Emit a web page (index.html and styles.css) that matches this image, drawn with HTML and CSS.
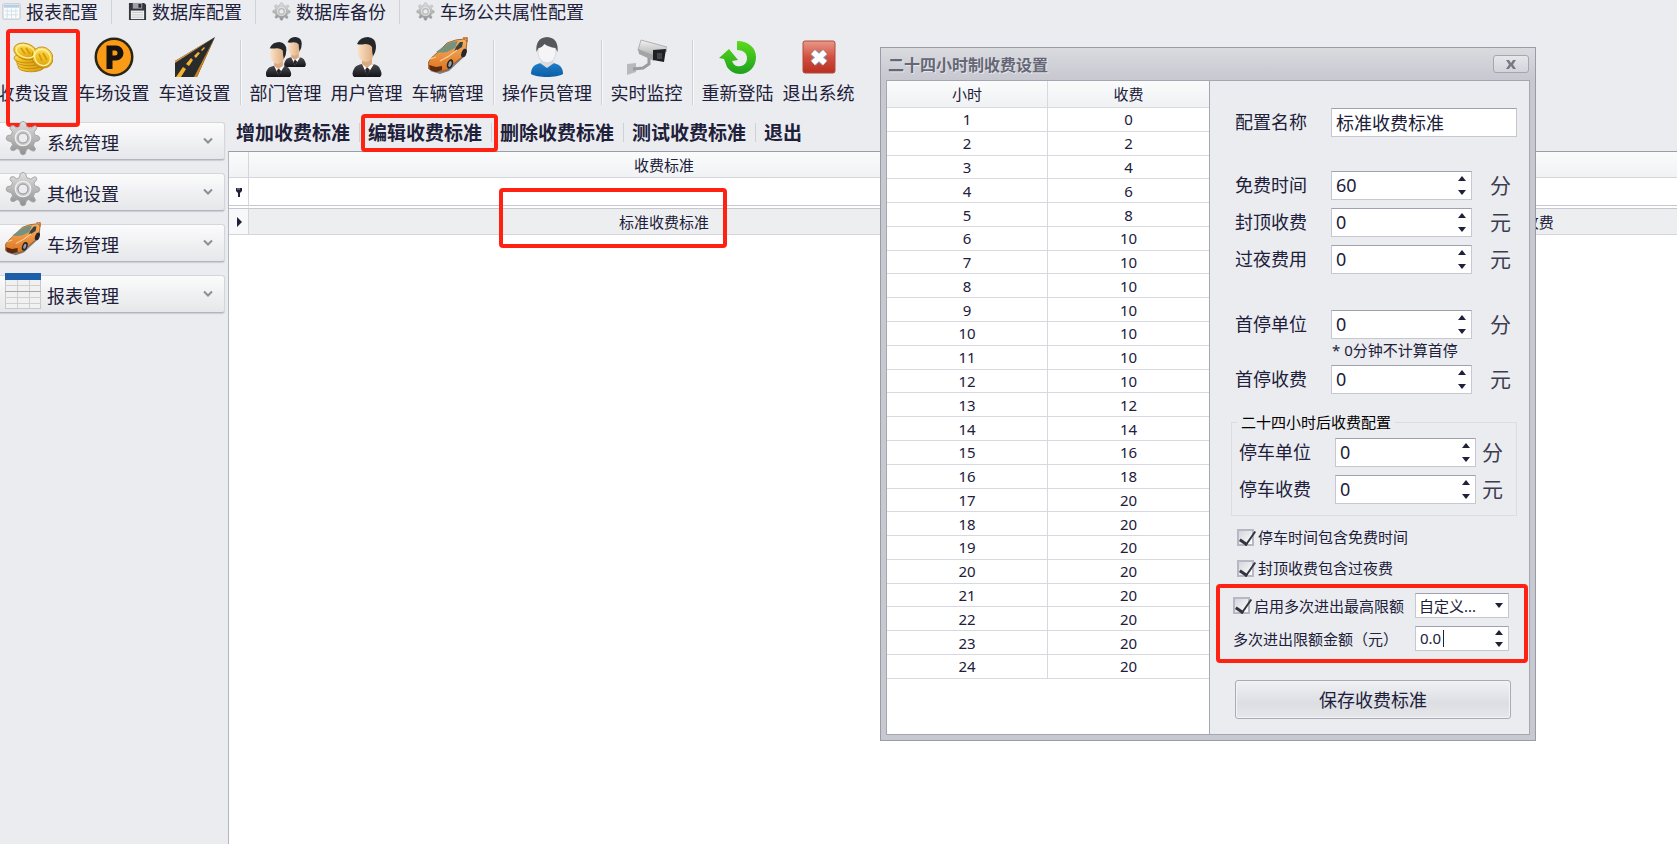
FILE: index.html
```
<!DOCTYPE html>
<html lang="zh-CN">
<head>
<meta charset="UTF-8" />
<title>收费设置</title>
<link rel="stylesheet" href="styles.css">
</head>
<body>

<!-- 图标 -->
<svg class="sprite" width="0" height="0" aria-hidden="true">
  <defs>
    <linearGradient id="silver" x1="0" y1="0" x2="0" y2="1"><stop offset="0" stop-color="#e2e2e2"/><stop offset="1" stop-color="#8f8f8f"/></linearGradient>
    <linearGradient id="gold" x1="0" y1="0" x2="1" y2="1"><stop offset="0" stop-color="#fff08a"/><stop offset=".5" stop-color="#f3c21f"/><stop offset="1" stop-color="#c88a10"/></linearGradient>
    <linearGradient id="orange" x1="0" y1="0" x2="0" y2="1"><stop offset="0" stop-color="#f7b164"/><stop offset="1" stop-color="#dd7420"/></linearGradient>
    <linearGradient id="skin" x1="0" y1="0" x2="1" y2="0"><stop offset="0" stop-color="#fbe3c8"/><stop offset="1" stop-color="#dba97c"/></linearGradient>
    <linearGradient id="suit" x1="0" y1="0" x2="0" y2="1"><stop offset="0" stop-color="#4a4a50"/><stop offset="1" stop-color="#111116"/></linearGradient>
    <linearGradient id="blue" x1="0" y1="0" x2="0" y2="1"><stop offset="0" stop-color="#1f7fc8"/><stop offset="1" stop-color="#0a5ca6"/></linearGradient>
    <linearGradient id="green" x1="0" y1="0" x2="0" y2="1"><stop offset="0" stop-color="#5bdc1b"/><stop offset="1" stop-color="#1f9f1f"/></linearGradient>
    <linearGradient id="red" x1="0" y1="0" x2="0" y2="1"><stop offset="0" stop-color="#e89a8a"/><stop offset=".5" stop-color="#d2503f"/><stop offset="1" stop-color="#b92f22"/></linearGradient>
    <linearGradient id="cam" x1="0" y1="0" x2="0" y2="1"><stop offset="0" stop-color="#f2f2f2"/><stop offset="1" stop-color="#a9a9a9"/></linearGradient>
  </defs>

  <symbol id="i-gear" viewBox="0 0 40 40">
    <path d="M17 3Q20 0 23 3L24.200 7.200L28.600 9L32.300 6.600Q36 6 35 10L32.200 13.400L33 16.500L37.500 18Q40 20.500 37.500 23L33 24.200L31.500 28L33.800 32Q33.600 35.600 29.500 34L26.200 31.700L23.800 33L22.500 37.500Q20 40 17.500 37.500L16.200 33L13.500 31.700L9.800 34Q6 34.500 6.200 31L8.500 27.500L7 24.200L2.500 22.800Q0 20.500 2.500 17.500L7 16.500L8.300 13L5.500 9.500Q5.500 5.800 9.500 6.200L13 8.700L16 7.200Z" fill="url(#silver)" stroke="#a2a2a2" stroke-width="1"/>
    <circle cx="20" cy="20" r="8.500" fill="#c9c9c9" stroke="#f0f0f0" stroke-width="1.500"/>
    <circle cx="20" cy="20" r="5.500" fill="#ebecef" stroke="#8c8c8c" stroke-width="1"/>
  </symbol>

  <symbol id="i-sheet" viewBox="0 0 20 20">
    <rect x="1" y="2" width="18" height="16" rx="1" fill="#fafcfd" stroke="#b9c0c8"/>
    <path d="M2 3h16v3H2z" fill="#b4d0e6"/>
    <path d="M5.500 7v10M10 7v10M14.500 7v10M3 9.500h14M3 13.500h14" stroke="#d3e0e8" stroke-width="1"/>
  </symbol>

  <symbol id="i-disk" viewBox="0 0 20 20">
    <path d="M1 1h16l2 2v16H1z" fill="#34363c"/>
    <path d="M5 1h10v6H5z" fill="#9ea2a8"/><path d="M11 2h3v4h-3z" fill="#2b2d32"/>
    <path d="M3 9h14v9H3z" fill="#f0f1f2"/><path d="M4 11h12M4 13.500h12M4 16h12" stroke="#c4c6c9"/>
  </symbol>

  <symbol id="i-coins" viewBox="0 0 40 40">
    <g fill="url(#gold)" stroke="#b98412" stroke-width=".8">
      <ellipse cx="18" cy="30" rx="13" ry="4.800"/>
      <ellipse cx="17" cy="27" rx="13" ry="4.800"/>
      <ellipse cx="16" cy="24" rx="13" ry="4.800"/>
      <ellipse cx="14" cy="21" rx="13" ry="5"/>
      <ellipse cx="12.500" cy="14.500" rx="12" ry="8" transform="rotate(18 12.500 14.500)"/>
      <ellipse cx="29.500" cy="20.500" rx="11" ry="10" transform="rotate(48 29.500 20.500)"/>
    </g>
    <g fill="none" stroke="#fff3a0" stroke-width="1.300">
      <ellipse cx="12.500" cy="14.500" rx="9.500" ry="6" transform="rotate(18 12.500 14.500)"/>
      <ellipse cx="29.500" cy="20.500" rx="8.500" ry="7.500" transform="rotate(48 29.500 20.500)"/>
    </g>
    <path d="M8 11l4 6M13 11l4 6M26 17l3 7M30 16l4 7" fill="none" stroke="#d39a14" stroke-width="1.800"/>
  </symbol>

  <symbol id="i-park" viewBox="0 0 40 40">
    <circle cx="20" cy="20" r="19.500" fill="#2a2415"/>
    <circle cx="20" cy="20" r="17" fill="#f99b16"/>
    <path d="M12.500 8.500H22a7.500 7.500 0 0 1 0 15h-3.500V32h-6zM18.500 13.500v5H21a2.500 2.500 0 0 0 0-5z" fill="#14130f" fill-rule="evenodd"/>
  </symbol>

  <symbol id="i-road" viewBox="0 0 40 40">
    <path d="M40 0L0 24v16h22z" fill="#2a2b2d"/>
    <path d="M40 0L0 24v2z" fill="#d79a45"/><path d="M40 0L19 40h3z" fill="#c9851f"/>
    <path d="M1 40l7-10 3 2-5 8zM11 27l5-6 2 2-4 6zM19 19l4-4 2 1-4 5zM26 13l3-3 1 1-3 3z" fill="#f6b32c"/>
  </symbol>

  <symbol id="i-man" viewBox="0 0 40 40">
    <path d="M7 40q-3-3 0-8c1-3 4-4 8-5l5 5 6-5c4 1 6 2 7 5 2 4 2 6 0 8q-13 1-26 0z" fill="url(#suit)"/>
    <path d="M15 27l5 11 7-11-7 2z" fill="#fff"/><path d="M20 30l-2 3 2 7 3-7z" fill="#25252b"/>
    <path d="M15 22h10v5l-5 4-5-4z" fill="#d9aa80"/>
    <ellipse cx="19" cy="14" rx="8.500" ry="11" fill="url(#skin)"/>
    <path d="M10 7Q13 0 21 0q8 1 8 9 0 6-3 10-1-3-1-9-2-3-7-3-5 1-8 0z" fill="#25282b"/>
  </symbol>

  <symbol id="i-men" viewBox="0 0 40 40">
    <use href="#i-man" x="14" y="0" width="30" height="30"/>
    <use href="#i-man" x="-5" y="5" width="35" height="35"/>
  </symbol>

  <symbol id="i-car" viewBox="0 0 40 40">
    <path d="M2 34l10 3 9-3 17-16v-4L22 31z" fill="#3a3a3a" opacity=".6"/>
    <path d="M0 27q1-5 9-11L19 6q9-4 17-4l3 2-1 10-4 6-11 9q-3 5-9 5-9 1-13-2-2-2-1-5z" fill="url(#orange)" stroke="#8f4c19" stroke-width=".8"/>
    <path d="M8 15L19 7q6-3 11-3l-3 7-8 4q-6 1-11 0z" fill="#77917f"/>
    <path d="M28 10l4-5 3 0-1 5-8 5z" fill="#38433d"/>
    <path d="M35 1l4 0v4" fill="none" stroke="#c4631c" stroke-width="1.500"/>
    <path d="M2 22l6-2M12 24l9-5 8-6" fill="none" stroke="#fbd19c" stroke-width="1.200"/>
    <ellipse cx="22" cy="27" rx="3" ry="5" fill="#26262a" transform="rotate(20 22 27)"/>
    <ellipse cx="22" cy="27" rx="1.500" ry="3" fill="#9d9da1" transform="rotate(20 22 27)"/>
    <ellipse cx="36" cy="16" rx="2.500" ry="4.500" fill="#26262a" transform="rotate(20 36 16)"/>
    <path d="M1 28l7 2 6-1v4l-6 2-6-2z" fill="#5a2b12"/>
  </symbol>

  <symbol id="i-user" viewBox="0 0 40 40">
    <path d="M4 37c0-7 4-10 10-11h12c6 1 10 4 10 11-6 4-26 4-32 0z" fill="url(#blue)"/>
    <path d="M13 26l7 5 7-5-3-6h-8z" fill="#dcdcdf"/>
    <ellipse cx="20" cy="15" rx="9" ry="11" fill="#f5f5f7" stroke="#c8c8cc" stroke-width=".6"/>
    <path d="M9.500 15Q8 1 20 0q12 1 10.500 15l-2-4q-7-1-11-4-3 4-6 4z" fill="#55585b"/>
  </symbol>

  <symbol id="i-camera" viewBox="0 0 40 40">
    <path d="M0 27l9-1v9l-9 3z" fill="#b9b9bb"/>
    <path d="M6 32l10-1 6-4v-6" fill="none" stroke="#9b9b9e" stroke-width="3"/>
    <path d="M14 3l26 7v4l-13 7-16-8z" fill="url(#cam)" stroke="#a2a2a4" stroke-width=".8"/>
    <path d="M11 12l15 6 1 6-15-7z" fill="#a4a4a6"/>
    <path d="M26 13l13-1-2 13-11-2z" fill="#202024"/><path d="M30 16h5v6h-5z" fill="#43434a"/>
  </symbol>

  <symbol id="i-relogin" viewBox="0 0 40 40">
    <path d="M19 4c12 0 19 7 19 16 0 10-7 17-16 17-6 0-10-3-13-7l-3-8-5-1L11 12l9 11-6 1c2 5 6 6 9 5 4-1 6-4 6-8 0-5-4-8-10-8z" fill="url(#green)"/>
  </symbol>

  <symbol id="i-exit" viewBox="0 0 40 40">
    <rect x="4" y="4" width="32" height="32" rx="2" fill="url(#red)" stroke="#b04a3c"/>
    <path d="M14 15l12 11M26 15L14 26" stroke="#8d9bb0" stroke-width="7.500"/>
    <path d="M14 15l12 11M26 15L14 26" stroke="#fff" stroke-width="5.500"/>
  </symbol>

  <symbol id="i-table" viewBox="0 0 36 36">
    <rect x=".5" y=".5" width="35" height="35" fill="#f1f1f1" stroke="#c9c9c9"/>
    <path d="M0 0h36v7H0z" fill="#1d5ea8"/>
    <path d="M0 12.500h36M0 24.500h36M0 30.500h36M12.500 7v28M24.500 7v28" stroke="#cfcfcf"/>
    <path d="M0 18.500h36" stroke="#a9a9a9"/>
  </symbol>

  <symbol id="i-chevron" viewBox="0 0 10 8">
    <path d="M1 1.500l4 4 4-4" fill="none" stroke="#8c8e99" stroke-width="2"/>
  </symbol>
</svg>

<nav class="menubar">
  <button><svg><use href="#i-sheet"/></svg>报表配置</button>
  <button><svg><use href="#i-disk"/></svg>数据库配置</button>
  <button><svg><use href="#i-gear"/></svg>数据库备份</button>
  <button><svg><use href="#i-gear"/></svg>车场公共属性配置</button>
</nav>

<div class="toolbar">
  <button><svg><use href="#i-coins"/></svg>收费设置<span class="mark mark-fee"></span></button>
  <button><svg><use href="#i-park"/></svg>车场设置</button>
  <button><svg><use href="#i-road"/></svg>车道设置</button>
  <i class="sep"></i>
  <button><svg><use href="#i-men"/></svg>部门管理</button>
  <button><svg><use href="#i-man"/></svg>用户管理</button>
  <button><svg><use href="#i-car"/></svg>车辆管理</button>
  <i class="sep"></i>
  <button class="wide"><svg><use href="#i-user"/></svg>操作员管理</button>
  <i class="sep"></i>
  <button><svg><use href="#i-camera"/></svg>实时监控</button>
  <i class="sep"></i>
  <button><svg><use href="#i-relogin"/></svg>重新登陆</button>
  <button><svg><use href="#i-exit"/></svg>退出系统</button>
</div>

<div class="main">
  <aside class="sidebar">
    <button><svg class="ico"><use href="#i-gear"/></svg><span>系统管理</span><svg class="chev"><use href="#i-chevron"/></svg></button>
    <button><svg class="ico"><use href="#i-gear"/></svg><span>其他设置</span><svg class="chev"><use href="#i-chevron"/></svg></button>
    <button><svg class="ico"><use href="#i-car"/></svg><span>车场管理</span><svg class="chev"><use href="#i-chevron"/></svg></button>
    <button><svg class="ico"><use href="#i-table"/></svg><span>报表管理</span><svg class="chev"><use href="#i-chevron"/></svg></button>
  </aside>

  <section class="content">
    <div class="actions">
      <button>增加收费标准</button>
      <button>编辑收费标准<span class="mark mark-edit"></span></button>
      <button>删除收费标准</button>
      <button>测试收费标准</button>
      <button>退出</button>
    </div>
    <div class="grid-wrap">
      <table class="grid">
        <colgroup><col class="c-ind"><col><col></colgroup>
        <thead>
          <tr><th></th><th>收费标准</th><th></th></tr>
        </thead>
        <tbody>
          <tr class="filter">
            <td><svg width="8" height="10" viewBox="0 0 8 10"><path d="M1 1h6v3L5 6H3L1 4z" fill="#20203a"/><path d="M2 2h3" stroke="#a0a0b0"/><path d="M4 5v5" stroke="#20203a" stroke-width="2"/></svg></td>
            <td></td><td></td>
          </tr>
          <tr class="current">
            <td><svg width="6" height="10" viewBox="0 0 6 10"><path d="M1 0l5 5-5 5z" fill="#20203a"/></svg></td>
            <td>标准收费标准<span class="mark mark-row"></span></td>
            <td class="type">收费</td>
          </tr>
        </tbody>
      </table>
    </div>
  </section>
</div>

<div class="dialog" role="dialog" aria-labelledby="dlg-title">
  <div class="dialog-title">
    <span id="dlg-title">二十四小时制收费设置</span>
    <button aria-label="关闭"><svg width="12" height="9" viewBox="0 0 12 9"><path d="M1 0h3l2 3 2-3h3L8 4.500 11 9H8L6 6 4 9H1l3-4.500z" fill="#777985"/></svg></button>
  </div>
  <div class="dialog-body">
    <div class="hours">
      <table>
        <thead><tr><th>小时</th><th>收费</th></tr></thead>
        <tbody>
          <tr><td>1</td><td>0</td></tr>
          <tr><td>2</td><td>2</td></tr>
          <tr><td>3</td><td>4</td></tr>
          <tr><td>4</td><td>6</td></tr>
          <tr><td>5</td><td>8</td></tr>
          <tr><td>6</td><td>10</td></tr>
          <tr><td>7</td><td>10</td></tr>
          <tr><td>8</td><td>10</td></tr>
          <tr><td>9</td><td>10</td></tr>
          <tr><td>10</td><td>10</td></tr>
          <tr><td>11</td><td>10</td></tr>
          <tr><td>12</td><td>10</td></tr>
          <tr><td>13</td><td>12</td></tr>
          <tr><td>14</td><td>14</td></tr>
          <tr><td>15</td><td>16</td></tr>
          <tr><td>16</td><td>18</td></tr>
          <tr><td>17</td><td>20</td></tr>
          <tr><td>18</td><td>20</td></tr>
          <tr><td>19</td><td>20</td></tr>
          <tr><td>20</td><td>20</td></tr>
          <tr><td>21</td><td>20</td></tr>
          <tr><td>22</td><td>20</td></tr>
          <tr><td>23</td><td>20</td></tr>
          <tr><td>24</td><td>20</td></tr>
        </tbody>
      </table>
    </div>

    <form class="settings" onsubmit="return false">
      <div class="row">
        <label for="name">配置名称</label>
        <input class="name" type="text" id="name" value="标准收费标准">
      </div>

      <div class="rows">
        <div class="row">
          <label for="free">免费时间</label>
          <div class="spin"><input type="number" id="free" value="60"><i></i></div><b>分</b>
        </div>
        <div class="row">
          <label for="cap">封顶收费</label>
          <div class="spin"><input type="number" id="cap" value="0"><i></i></div><b>元</b>
        </div>
        <div class="row">
          <label for="night">过夜费用</label>
          <div class="spin"><input type="number" id="night" value="0"><i></i></div><b>元</b>
        </div>
      </div>

      <div class="first">
        <div class="row">
          <label for="firstUnit">首停单位</label>
          <div class="spin"><input type="number" id="firstUnit" value="0"><i></i></div><b>分</b>
        </div>
        <p class="note">* 0分钟不计算首停</p>
        <div class="row">
          <label for="firstFee">首停收费</label>
          <div class="spin"><input type="number" id="firstFee" value="0"><i></i></div><b>元</b>
        </div>
      </div>

      <fieldset>
        <legend>二十四小时后收费配置</legend>
        <div class="row">
          <label for="unit">停车单位</label>
          <div class="spin"><input type="number" id="unit" value="0"><i></i></div><b>分</b>
        </div>
        <div class="row">
          <label for="fee">停车收费</label>
          <div class="spin"><input type="number" id="fee" value="0"><i></i></div><b>元</b>
        </div>
      </fieldset>

      <div class="checks">
        <label><input type="checkbox" checked>停车时间包含免费时间</label>
        <label><input type="checkbox" checked>封顶收费包含过夜费</label>
      </div>

      <div class="limit">
        <label><input type="checkbox" checked>启用多次进出最高限额</label>
        <div class="drop">
          <select aria-label="限额类型"><option>自定义...</option></select>
        </div>
        <label for="limit">多次进出限额金额（元）</label>
        <div class="spin small"><input type="number" id="limit" step="0.1" value="0.0"><i></i><span class="caret"></span></div>
      </div>

      <button class="save">保存收费标准</button>
    </form>
  </div>
</div>

</body>
</html>
```
FILE: styles.css
```
* {
  box-sizing: border-box;
}

html, body {
  margin: 0;
  height: 100%;
}

body {
  display: flex;
  flex-direction: column;
  position: relative;
  overflow: hidden;
  background: #ebecef;
  font-family: "Noto Sans", "Noto Sans CJK SC", sans-serif;
  font-size: 18px;
  color: #20203a;
}

button, input, select {
  font: inherit;
  color: inherit;
}

button {
  background: none;
  border: none;
  padding: 0;
  margin: 0;
  white-space: nowrap;
}

.sprite {
  position: absolute;
}

/* 红色标记框 */
.mark {
  position: absolute;
  border: 4px solid #ff2213;
  border-radius: 4px;
  z-index: 2;
  pointer-events: none;
}

.mark-fee {
  top: 5px;
  left: 14px;
  width: 74px;
  height: 98px;
}

.mark-edit {
  top: -3px;
  left: 1px;
  width: 137px;
  height: 38px;
}

.mark-row {
  top: -21px;
  left: 50%;
  margin-left: -165px;
  width: 228px;
  height: 60px;
}

/* 顶部菜单 */
.menubar {
  display: flex;
  height: 24px;
}

.menubar button {
  display: flex;
  align-items: center;
  gap: 5px;
  padding: 0 13px 2px 16px;
  position: relative;
}

.menubar button:first-child {
  padding-left: 2px;
}

.menubar button + button {
  border-left: 1px solid #d2d3d9;
}

.menubar svg {
  width: 19px;
  height: 19px;
}

/* 工具栏 */
.toolbar {
  display: flex;
  height: 93px;
  margin-left: -8px;
}

.toolbar button {
  display: flex;
  flex-direction: column;
  align-items: center;
  gap: 5px;
  width: 81px;
  padding-top: 13px;
  line-height: 22px;
  position: relative;
}

.toolbar .wide {
  width: 98px;
}

.toolbar button svg {
  width: 40px;
  height: 40px;
}

.sep {
  width: 1px;
  margin: 16px 4px 12px 5px;
  background: #cfd0d6;
  box-shadow: 1px 0 #fafafb;
}

.main {
  display: flex;
  flex: 1;
  min-height: 0;
}

/* 左侧导航 */
.sidebar {
  display: flex;
  flex-direction: column;
  gap: 13px;
  width: 228px;
  padding: 5px 3px 0 0;
}

.sidebar button {
  display: flex;
  align-items: center;
  height: 38px;
  padding: 0 11px 0 5px;
  border: 1px solid #d5d6db;
  border-bottom-color: #b3b4c0;
  border-left: none;
  border-radius: 0 3px 3px 0;
  background: linear-gradient(#fbfbfc, #e6e7ea);
  box-shadow: 0 1px 1px #cccdd5;
}

/* 图标盖在标记框上面 */
.sidebar .ico {
  position: relative;
  z-index: 3;
  width: 36px;
  height: 36px;
  margin-top: -6px;
}

.sidebar span {
  margin: 2px auto 0 6px;
}

.sidebar .chev {
  width: 10px;
  height: 8px;
}

/* 右侧内容 */
.content {
  display: flex;
  flex-direction: column;
  flex: 1;
  min-width: 0;
}

.actions {
  display: flex;
  height: 34px;
}

.actions button {
  position: relative;
  padding: 0 9px 2px 8px;
  height: 31px;
  font-size: 19px;
  font-weight: bold;
}

.actions button + button::before {
  content: "";
  position: absolute;
  left: -1px;
  top: 6px;
  bottom: 6px;
  width: 1px;
  background: #d0d1d8;
}

.actions button + button {
  margin-left: 1px;
}

.grid-wrap {
  flex: 1;
  overflow: hidden;
  border-top: 1px solid #9c9daa;
  border-left: 1px solid #b4b5c2;
  background: #fff;
}

.grid {
  width: 116%;
  table-layout: fixed;
  border-collapse: separate;
  border-spacing: 0;
  font-size: 15px;
  text-align: center;
}

.c-ind {
  width: 20px;
}

.grid th, .grid td {
  position: relative;
  height: 26px;
  padding: 0;
  line-height: 20px;
  font-weight: normal;
  border-bottom: 1px solid #d5d6dc;
}

.grid th {
  background: linear-gradient(#fafbfb, #f1f2f4);
}

.grid tr > :first-child {
  border-right: 1px solid #d5d6dc;
}

.grid td svg {
  display: block;
  margin: 0 auto;
}

.grid .filter td {
  height: 31px;
  border-bottom: 4px double #c6c7d1;
}

.grid .current td {
  background: #edeef0;
}

.grid .current td:first-child {
  background: #f7f8f9;
}

.grid .type {
  padding-left: 90px;
}

/* 对话框 */
.dialog {
  position: absolute;
  z-index: 5;
  top: 47px;
  left: 880px;
  width: 656px;
  padding: 0 5px 5px;
  border: 1px solid #9a9ba6;
  background: #c7c8d0;
}

.dialog-title {
  display: flex;
  align-items: center;
  justify-content: space-between;
  height: 32px;
  margin: 0 -5px;
  padding: 0 6px 0 7px;
  background: linear-gradient(#dadbdf, #c7c8d0);
  font-size: 16px;
  font-weight: bold;
  color: #666776;
  text-shadow: 1px 1px #e6e7ea;
}

.dialog-title button {
  display: flex;
  align-items: center;
  justify-content: center;
  width: 36px;
  height: 18px;
  border: 1px solid #a5a6b2;
  border-radius: 3px;
  background: linear-gradient(#e6e7ea, #d3d4da);
}

.dialog-body {
  display: flex;
  border: 1px solid #a5a6b2;
  background: #ebecef;
}

.hours {
  width: 323px;
  border-right: 1px solid #a5a6b2;
  background: #fff;
}

.hours table {
  width: 100%;
  height: 598px;
  table-layout: fixed;
  border-collapse: separate;
  border-spacing: 0;
  font-size: 15px;
  line-height: 20px;
  text-align: center;
}

.hours th, .hours td {
  padding: 0;
  font-weight: normal;
  border-bottom: 1px solid #d8d9e0;
}

.hours th {
  height: 27px;
  background: linear-gradient(#fafbfb, #f0f1f3);
}

.hours tr > :first-child {
  border-right: 1px solid #d8d9e0;
}

.settings {
  flex: 1;
  padding: 27px 12px 15px 25px;
}

.row {
  display: grid;
  grid-template-columns: 96px 141px 1fr;
  align-items: center;
  height: 29px;
}

.row label {
  line-height: 26px;
  padding-bottom: 2px;
}

.row b {
  padding-left: 18px;
  font-size: 21px;
  font-weight: normal;
  line-height: 29px;
  color: #3c3c50;
}

.rows {
  display: grid;
  gap: 8px;
  margin: 34px 0 36px;
}

.name, .spin, .drop {
  height: 29px;
  border: 1px solid #c6c7d1;
  border-top-color: #a0a1ae;
  background: #fff;
}

.name {
  grid-column: 2 / 4;
  width: 100%;
  padding: 0 4px 1px;
}

.spin, .drop {
  position: relative;
}

.spin input {
  width: 100%;
  height: 100%;
  padding: 0 24px 1px 4px;
  border: none;
  background: none;
  appearance: textfield;
}

.spin input::-webkit-inner-spin-button {
  appearance: none;
}

/* 上下箭头 */
.spin i::before, .spin i::after, .drop::after {
  content: "";
  position: absolute;
  right: 5px;
  border: 4px solid transparent;
}

.spin i::before {
  top: 0;
  border-bottom: 5px solid #20203a;
}

.spin i::after {
  bottom: 0;
  border-top: 5px solid #20203a;
}

.drop::after {
  top: 9px;
  border-top: 5px solid #20203a;
}

.note {
  margin: 0 0 0 97px;
  font-size: 15px;
  line-height: 22px;
  padding-bottom: 4px;
}

fieldset {
  margin: 17px 0 0 -4px;
  padding: 5px 0 11px 7px;
  border: 1px solid #dcdddf;
}

legend {
  margin-left: -2px;
  padding: 0 4px;
  font-size: 15px;
  line-height: 22px;
  color: #000;
}

fieldset .row + .row {
  margin-top: 8px;
}

fieldset .row b {
  padding-left: 6px;
}

.checks {
  display: grid;
  gap: 9px;
  margin-top: 10px;
  padding-left: 2px;
}

.checks label, .limit label {
  display: flex;
  align-items: center;
  gap: 4px;
  font-size: 15px;
  line-height: 22px;
  white-space: nowrap;
}

input[type=checkbox] {
  appearance: none;
  position: relative;
  width: 17px;
  height: 17px;
  margin: 0;
  border: 2px solid #b7b8c3;
  background: linear-gradient(135deg, #d4d5dc, #fff);
}

input[type=checkbox]:checked::after {
  content: "";
  position: absolute;
  left: 4px;
  top: -3px;
  width: 7px;
  height: 14px;
  border: solid #33343f;
  border-width: 0 2px 3px 0;
  transform: rotate(35deg);
}

.limit {
  display: grid;
  grid-template-columns: 1fr 94px;
  row-gap: 8px;
  margin: 5px -11px 17px -19px;
  padding: 5px 15px 8px 13px;
  border: 4px solid #ff2213;
  border-radius: 4px;
}

.drop, .small {
  height: 25px;
  font-size: 15px;
}

.drop select {
  width: 100%;
  height: 100%;
  padding: 0 3px;
  border: none;
  background: none;
  appearance: none;
}

.small i::before {
  top: -1px;
}

.small i::after {
  bottom: -1px;
}

.caret {
  position: absolute;
  left: 27px;
  top: 3px;
  width: 1px;
  height: 17px;
  background: #20203a;
}

.save {
  display: block;
  width: 276px;
  height: 39px;
  padding-bottom: 1px;
  border: 1px solid #a9aab5;
  border-radius: 3px;
  background: linear-gradient(#f0f1f3, #dcdee3 60%, #e6e7ea);
  box-shadow: inset 0 0 0 1px #f4f4f6;
}
```
